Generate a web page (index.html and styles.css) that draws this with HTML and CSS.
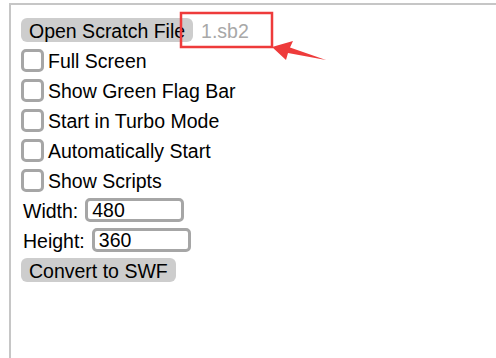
FILE: index.html
```html
<!DOCTYPE html>
<html>
<head>
<meta charset="utf-8">
<link rel="stylesheet" href="styles.css">
</head>
<body>
<div class="panel">
  <div class="row">
    <span class="btn">Open Scratch File</span>
    <span class="filename">1.sb2</span>
  </div>
  <div class="row"><span class="check"></span><span class="label">Full Screen</span></div>
  <div class="row"><span class="check"></span><span class="label">Show Green Flag Bar</span></div>
  <div class="row"><span class="check"></span><span class="label">Start in Turbo Mode</span></div>
  <div class="row"><span class="check"></span><span class="label">Automatically Start</span></div>
  <div class="row"><span class="check"></span><span class="label">Show Scripts</span></div>
  <div class="row field"><span class="label">Width:</span><span class="input">480</span></div>
  <div class="row field"><span class="label">Height:</span><span class="input">360</span></div>
  <div class="row"><span class="btn">Convert to SWF</span></div>
</div>
<svg class="annot" width="496" height="358" viewBox="0 0 496 358">
  <rect x="181" y="13" width="91" height="34" fill="none" stroke="#ee3b3b" stroke-width="2.5"/>
  <polygon points="272,47 293,41 290,47.5 326,60 288,53 286,60" fill="#ee3b3b"/>
</svg>
</body>
</html>
```

FILE: styles.css
```css
html, body {
  margin: 0;
  padding: 0;
  background: #fff;
}
body {
  width: 496px;
  height: 358px;
  overflow: hidden;
  position: relative;
  font-family: "Liberation Sans", Arial, sans-serif;
  font-size: 19.5px;
  color: #000;
}
.panel {
  margin: 3px 0 0 9px;
  height: 355px;
  box-sizing: border-box;
  border-top: 2px solid #c6c6c6;
  border-left: 2px solid #c6c6c6;
  padding: 10px 0 0 10px;
  display: flex;
  flex-direction: column;
}
.row {
  height: 30px;
  display: flex;
  align-items: center;
  white-space: nowrap;
}
.btn {
  height: 24px;
  box-sizing: border-box;
  padding: 3px 8px 0;
  line-height: 21px;
  background: #cdcdcd;
  border-radius: 6px;
}
.filename {
  margin-left: 8px;
  color: #a8a8a8;
  padding-top: 3px;
}
.label {
  padding-top: 3px;
}
.check {
  width: 23px;
  height: 23px;
  box-sizing: border-box;
  border: 3px solid #a6a6a6;
  border-radius: 5px;
  margin-right: 4px;
  background: #fff;
}
.field > .label {
  padding-left: 2px;
}
.input {
  margin-left: 7px;
  width: 99px;
  height: 24px;
  line-height: 19px;
  box-sizing: border-box;
  border: 3px solid #a6a6a6;
  border-radius: 5px;
  padding: 0 4px;
}
.annot {
  position: absolute;
  left: 0;
  top: 0;
  pointer-events: none;
}
```
